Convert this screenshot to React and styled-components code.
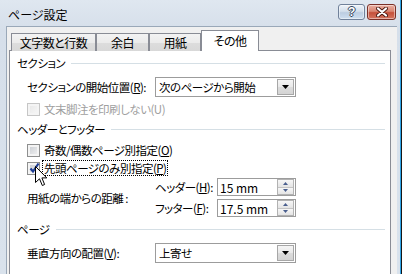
import React from "react";
import styled, { createGlobalStyle } from "styled-components";

const GlobalStyle = createGlobalStyle`
  html, body {
    margin: 0;
    padding: 0;
    width: 402px;
    height: 274px;
    overflow: hidden;
    background: #f0f0f0;
  }
  body {
    font-family: "Noto Sans CJK JP", "Liberation Sans", sans-serif;
    font-size: 11.5px;
    letter-spacing: -0.5px;
    font-feature-settings: "palt" 1;
    white-space: nowrap;
    color: #000;
  }
`;

const Window = styled.div`
  box-sizing: border-box;
  width: 402px;
  height: 274px;
  display: flex;
  flex-direction: column;
  padding: 0 5px 0 6px;
  background: linear-gradient(#dfe7f0, #d6dfea 30px, #d9e2ec);
  box-shadow: inset -1px 0 #161616, inset -2px 0 #2ea3e6;
`;

const TitleBar = styled.div`
  height: 26px;
  display: flex;
  align-items: flex-start;
  justify-content: space-between;
`;

const Title = styled.div`
  margin: 7px 0 0 2px;
  line-height: 16px;
  font-size: 12px;
  letter-spacing: 0;
`;

const TitleButtons = styled.div`
  display: flex;
  gap: 2px;
  margin: 4px 1px 0 0;
`;

const CaptionButton = styled.div`
  box-sizing: border-box;
  width: ${p => p.$w}px;
  height: 16px;
  border-radius: 3px;
  display: flex;
  align-items: center;
  justify-content: center;
  border: 1px solid ${p => (p.$close ? "#7a3027" : "#70819a")};
  background: ${p =>
    p.$close
      ? "linear-gradient(#eab0a2 0%, #d98672 45%, #c5503a 55%, #d47560 100%)"
      : "linear-gradient(#eef3f9 0%, #d3dfec 45%, #bccde1 55%, #cfdff0 100%)"};
  box-shadow: inset 0 0 0 1px rgba(255, 255, 255, 0.45);
`;

const HelpGlyph = styled.span`
  font-family: "Liberation Sans", sans-serif;
  font-weight: bold;
  font-size: 12px;
  line-height: 12px;
  color: #fff;
  text-shadow: -1px 0 #34445c, 1px 0 #34445c, 0 -1px #34445c, 0 1px #34445c;
`;

const Client = styled.div`
  flex: 1;
  display: flex;
  flex-direction: column;
  padding: 3px 0 0 2px;
  background: #f0f0f0;
  border-left: 1px solid #9aa8b8;
  border-top: 1px solid #9aa8b8;
  min-height: 0;
`;

const TabStrip = styled.div`
  display: flex;
  align-items: flex-end;
  height: 21px;
  padding-left: 2px;
  margin-bottom: -1px;
  position: relative;
  z-index: 1;
`;

const Tab = styled.div`
  box-sizing: border-box;
  width: ${p => p.$w}px;
  height: ${p => (p.$active ? 21 : 18)}px;
  padding-bottom: ${p => (p.$active ? 2 : 0)}px;
  border: 1px solid #898c95;
  border-bottom: none;
  display: flex;
  align-items: center;
  justify-content: center;
  font-size: 12px;
  background: ${p => (p.$active ? "#fff" : "linear-gradient(#f3f3f3, #ebebeb 50%, #dddddd 51%, #d8d8d8)")};
`;

const Panel = styled.div`
  position: relative;
  box-sizing: border-box;
  width: 382px;
  flex: 1;
  display: flex;
  flex-direction: column;
  padding: 0 5px 0 7px;
  background: #fff;
  border: 1px solid #898c95;
  border-bottom: none;
`;

const GroupHeader = styled.div`
  display: flex;
  align-items: center;
  height: 14px;
  margin-top: ${p => p.$top}px;
`;

const GroupLine = styled.div`
  flex: 1;
  height: 1px;
  margin-left: 6px;
  background: #d5dfe5;
`;

const FieldRow = styled.div`
  display: grid;
  grid-template-columns: 128px 141px;
  align-items: center;
  height: 20px;
  margin: ${p => p.$top}px 0 0 10px;
`;

const Key = styled.span`
  text-decoration: underline;
  text-underline-offset: 1px;
`;

const Select = styled.div`
  box-sizing: border-box;
  height: 20px;
  display: flex;
  align-items: center;
  padding-left: 3px;
  border: 1px solid #9c9c9c;
  background: #fff;
`;

const SideButton = styled.div`
  box-sizing: border-box;
  width: 17px;
  height: 16px;
  margin: 0 1px 0 auto;
  border: 1px solid #a7a7a7;
  display: flex;
  align-items: center;
  justify-content: center;
  background: linear-gradient(#f5f5f5, #e9e9e9 50%, #dcdcdc 51%, #d4d4d4);
`;

const SpinButton = styled.div`
  box-sizing: border-box;
  width: 17px;
  height: 16px;
  margin: 0 1px 0 auto;
  border: 1px solid #b2b2b2;
  display: flex;
  flex-direction: column;
`;

const SpinHalf = styled.div`
  flex: 1;
  display: flex;
  align-items: center;
  justify-content: center;
  background: linear-gradient(#f7f7f7, #e4e4e4);
  & + & {
    border-top: 1px solid #c4c4c4;
  }
`;

const CheckRow = styled.div`
  display: flex;
  align-items: center;
  height: 18px;
  margin: ${p => p.$top}px 0 0 10px;
  color: ${p => (p.$disabled ? "#a0a0a0" : "#000")};
`;

const Box = styled.div`
  position: relative;
  box-sizing: border-box;
  width: 13px;
  height: 13px;
  border: 1px solid ${p => (p.$disabled ? "#c6c6c6" : "#8e8f8f")};
  background: ${p =>
    p.$disabled ? "linear-gradient(135deg, #e6e6e6, #f8f8f8)" : "linear-gradient(135deg, #c6cad0, #f4f4f4)"};
  box-shadow: inset 0 0 0 2px #f4f4f4;
`;

const Check = styled.svg`
  position: absolute;
  left: 0;
  top: -2px;
`;

const CheckLabel = styled.span`
  margin-left: 2px;
  padding: 0 1px;
  line-height: 14px;
  border: 1px dotted ${p => (p.$focus ? "#000" : "transparent")};
`;

const DistanceGrid = styled.div`
  display: grid;
  grid-template-columns: 128px 62px 79px;
  grid-template-rows: 18px 18px;
  row-gap: 3px;
  align-items: center;
  margin: 1px 0 0 10px;
`;

const DistanceLabel = styled.div`
  grid-row: 1 / 3;
`;

const SpinBox = styled.div`
  box-sizing: border-box;
  height: 18px;
  display: flex;
  align-items: center;
  padding-left: 2px;
  border: 1px solid #9c9c9c;
  background: #fff;
  letter-spacing: 0;
  font-size: 12px;
`;

const Cursor = styled.svg`
  position: absolute;
  left: 25px;
  top: 115px;
`;

const DownArrow = () => (
  <svg width="7" height="4" viewBox="0 0 7 4">
    <polygon points="0,0 7,0 3.5,4" fill="#000" />
  </svg>
);

const SmallArrow = ({ up }) => (
  <svg width="5" height="3" viewBox="0 0 5 3">
    <polygon points={up ? "0,3 5,3 2.5,0" : "0,0 5,0 2.5,3"} fill="#4a5f8e" />
  </svg>
);

function Dropdown({ value }) {
  return (
    <Select>
      {value}
      <SideButton>
        <DownArrow />
      </SideButton>
    </Select>
  );
}

function Spinner({ value }) {
  return (
    <SpinBox>
      {value}
      <SpinButton>
        <SpinHalf>
          <SmallArrow up />
        </SpinHalf>
        <SpinHalf>
          <SmallArrow />
        </SpinHalf>
      </SpinButton>
    </SpinBox>
  );
}

function CheckItem({ top, disabled, checked, focus, children }) {
  return (
    <CheckRow $top={top} $disabled={disabled}>
      <Box $disabled={disabled}>
        {checked && (
          <Check width="14" height="14" viewBox="0 0 14 14">
            <path d="M2.5 7.5 L5 10.5 L10.5 2.5" fill="none" stroke="#1d3d96" strokeWidth="2.2" />
          </Check>
        )}
      </Box>
      <CheckLabel $focus={focus}>{children}</CheckLabel>
    </CheckRow>
  );
}

function Group({ top, children }) {
  return (
    <GroupHeader $top={top}>
      {children}
      <GroupLine />
    </GroupHeader>
  );
}

const tabs = [
  { label: "文字数と行数", w: 85 },
  { label: "余白", w: 53 },
  { label: "用紙", w: 52 },
  { label: "その他", w: 58, active: true },
];

export default function App() {
  return (
    <>
      <GlobalStyle />
      <Window>
        <TitleBar>
          <Title>ページ設定</Title>
          <TitleButtons>
            <CaptionButton $w={27}>
              <HelpGlyph>?</HelpGlyph>
            </CaptionButton>
            <CaptionButton $w={29} $close>
              <svg width="12" height="10" viewBox="0 0 12 10">
                <path d="M2 1.5 L10 8.5 M10 1.5 L2 8.5" stroke="#4a1810" strokeWidth="4" strokeLinecap="round" />
                <path d="M2 1.5 L10 8.5 M10 1.5 L2 8.5" stroke="#fff" strokeWidth="2.2" strokeLinecap="round" />
              </svg>
            </CaptionButton>
          </TitleButtons>
        </TitleBar>
        <Client>
          <TabStrip>
            {tabs.map(t => (
              <Tab key={t.label} $w={t.w} $active={t.active}>
                {t.label}
              </Tab>
            ))}
          </TabStrip>
          <Panel>
            <Group top={5}>セクション</Group>
            <FieldRow $top={7}>
              <span>
                セクションの開始位置(<Key>R</Key>):
              </span>
              <Dropdown value="次のページから開始" />
            </FieldRow>
            <CheckItem top={3} disabled>
              文末脚注を印刷しない(U)
            </CheckItem>

            <Group top={4}>ヘッダーとフッター</Group>
            <CheckItem top={5}>
              奇数/偶数ページ別指定(<Key>O</Key>)
            </CheckItem>
            <CheckItem top={0} checked focus>
              先頭ページのみ別指定(<Key>P</Key>)
            </CheckItem>
            <DistanceGrid>
              <DistanceLabel>用紙の端からの距離 :</DistanceLabel>
              <span>
                ヘッダー(<Key>H</Key>):
              </span>
              <Spinner value="15 mm" />
              <span>
                フッター(<Key>F</Key>):
              </span>
              <Spinner value="17.5 mm" />
            </DistanceGrid>

            <Group top={5}>ページ</Group>
            <FieldRow $top={7}>
              <span>
                垂直方向の配置(<Key>V</Key>):
              </span>
              <Dropdown value="上寄せ" />
            </FieldRow>

            <Cursor width="13" height="21" viewBox="0 0 13 21">
              <path
                d="M0.5 0.5 V16.5 L4.5 12.8 L7.3 19.5 L9.6 18.5 L6.9 11.9 H11.8 Z"
                fill="#fff"
                stroke="#000"
                strokeWidth="1"
                strokeLinejoin="miter"
              />
            </Cursor>
          </Panel>
        </Client>
      </Window>
    </>
  );
}
